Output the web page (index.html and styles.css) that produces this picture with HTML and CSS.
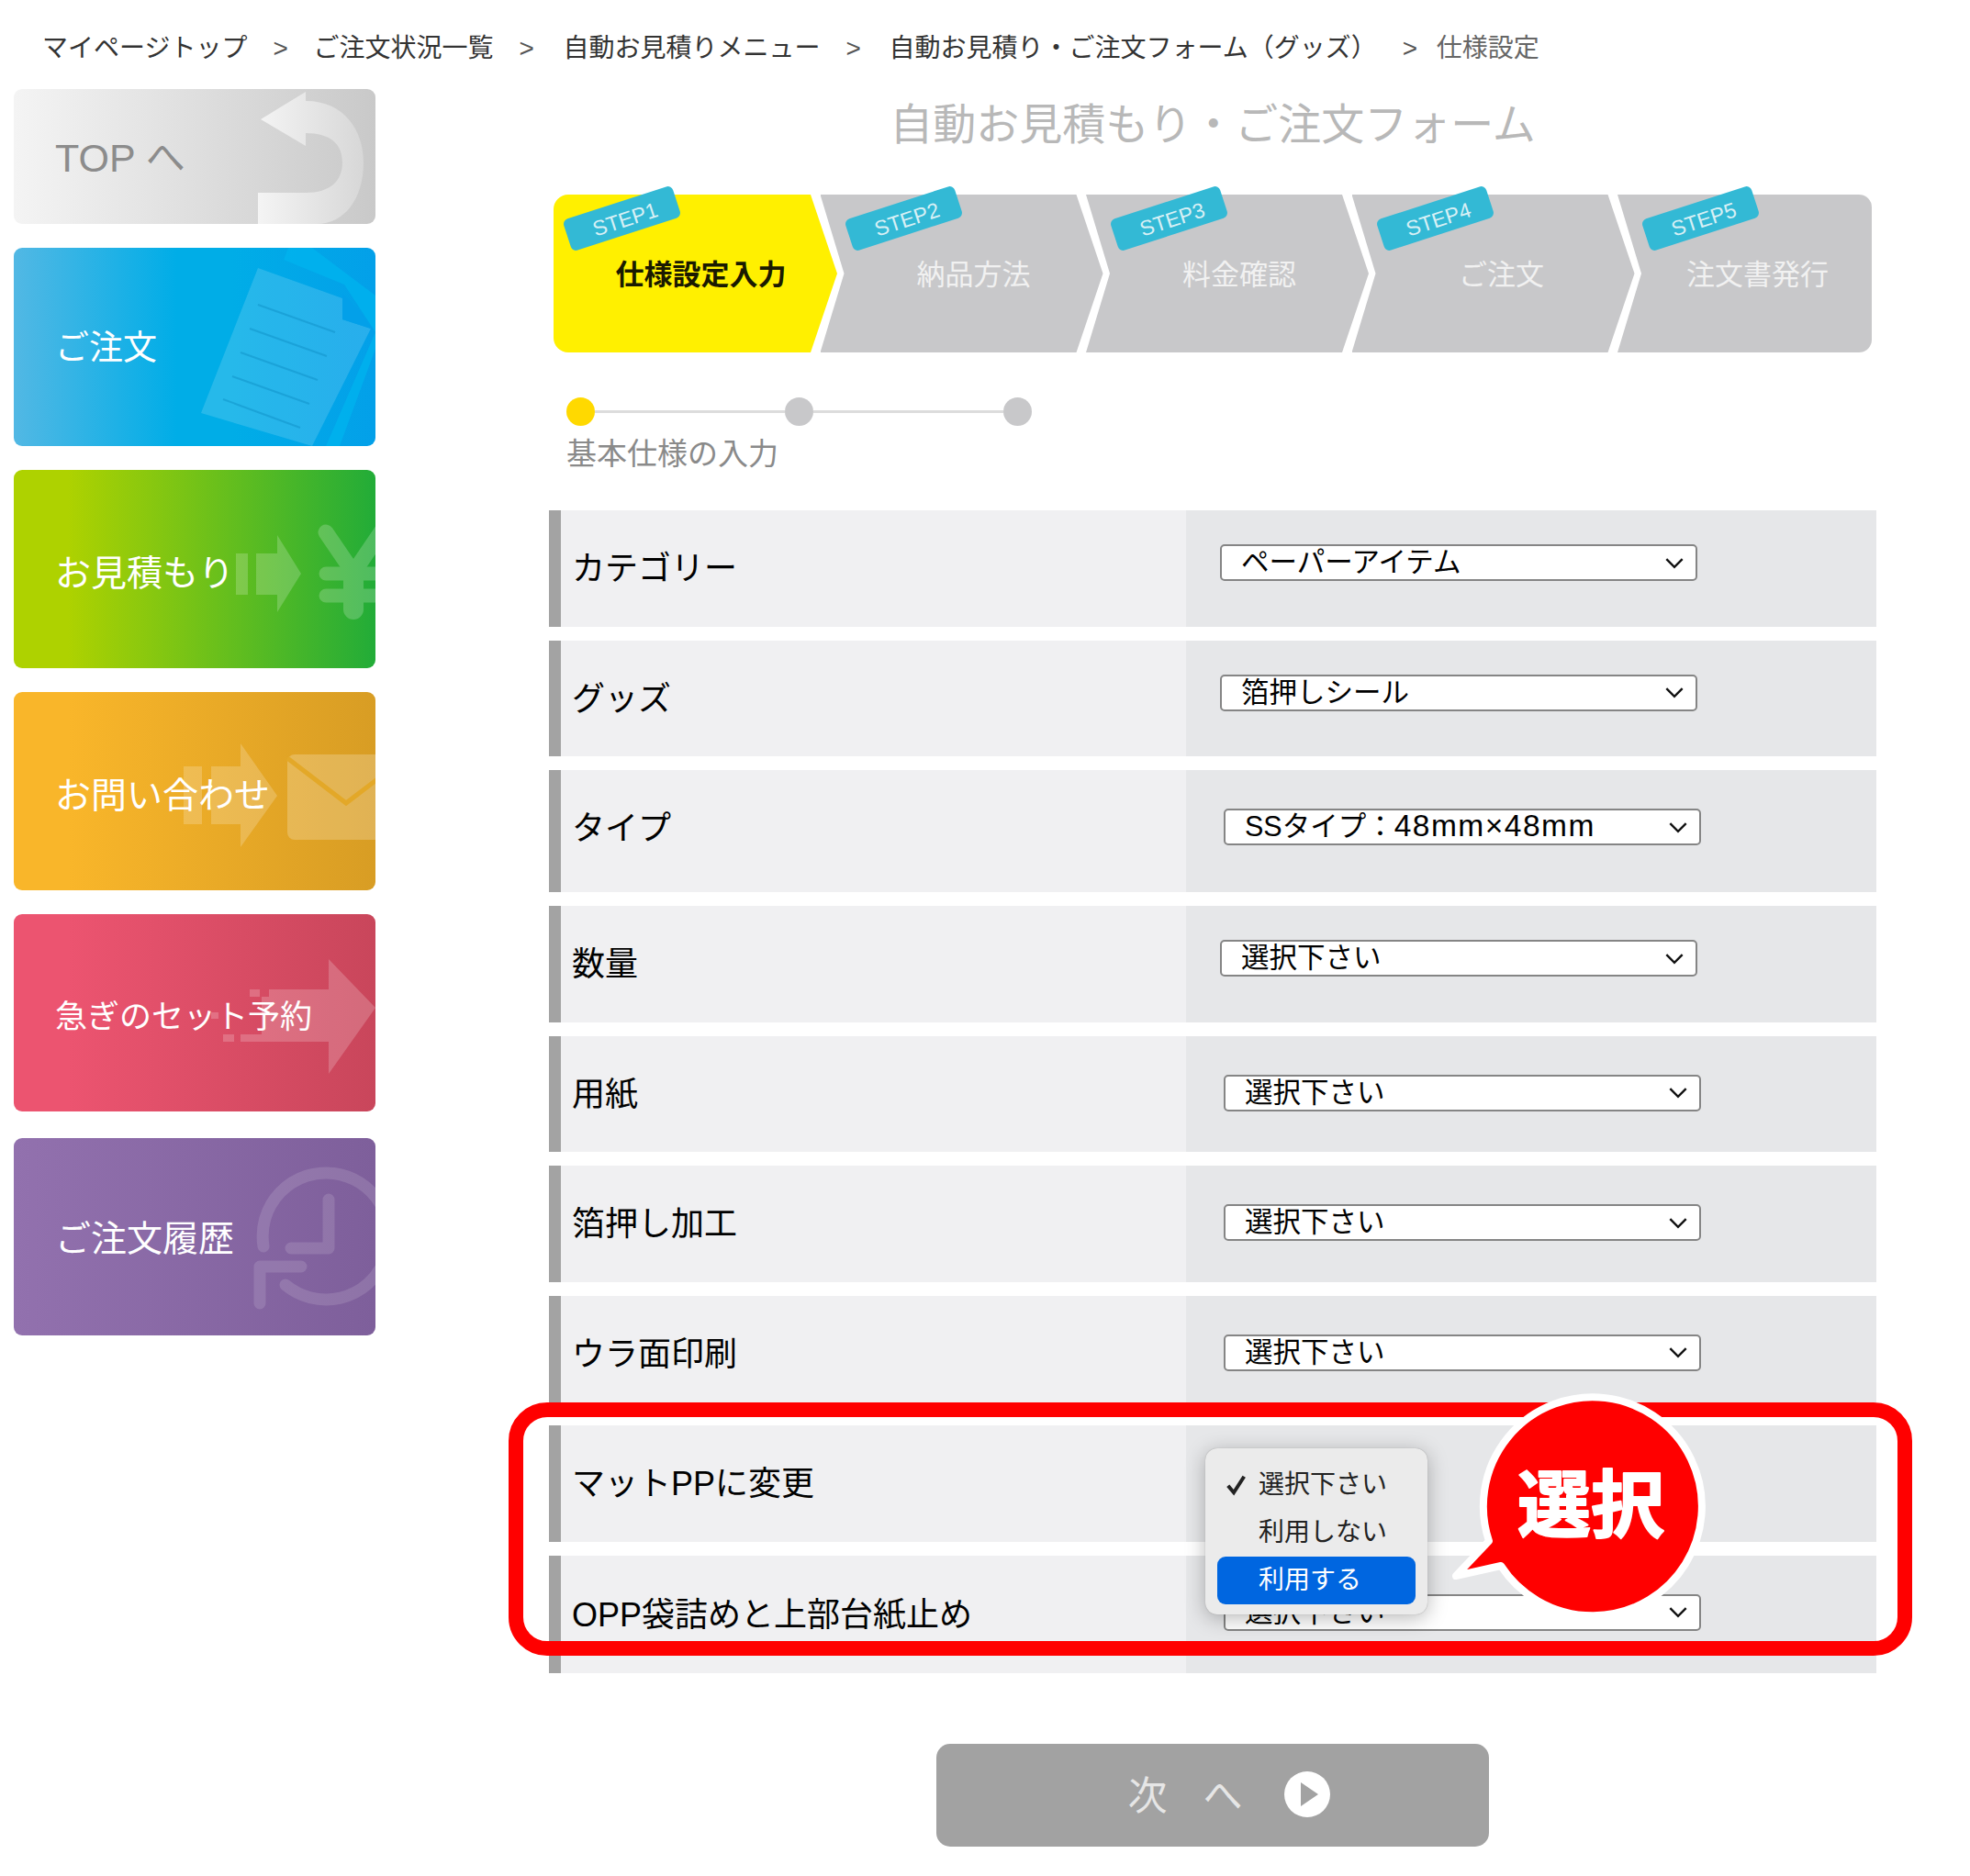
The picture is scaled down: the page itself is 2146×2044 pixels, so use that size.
FILE: index.html
```html
<!DOCTYPE html>
<html lang="ja">
<head>
<meta charset="utf-8">
<title>仕様設定</title>
<link rel="stylesheet" href="styles.css">
</head>
<body>
<nav class="crumbs">
  <a>マイページトップ</a><span class="sep">&gt;</span>
  <a>ご注文状況一覧</a><span class="sep sep--b">&gt;</span>
  <a>自動お見積りメニュー</a><span class="sep sep--c">&gt;</span>
  <a>自動お見積り・ご注文フォーム（グッズ）</a><span class="sep sep--d">&gt;</span>
  <span class="current">仕様設定</span>
</nav>
<div class="layout">
  <aside class="side">
    <a class="card card--top"><span>TOP へ</span>
      <svg class="deco" viewBox="0 0 394 147"><defs><linearGradient id="g1" gradientUnits="userSpaceOnUse" x1="266" y1="0" x2="385" y2="0"><stop offset="0" stop-color="#f4f4f4"/><stop offset="1" stop-color="#d6d6d6"/></linearGradient></defs><path fill="url(#g1)" d="M269 33 318 3V13C360 13 381 45 381 80 381 120 360 147 330 147H266V113H318C345 113 358 100 358 80 358 60 345 48 318 48V62Z"/></svg>
    </a>
    <a class="card card--order"><span>ご注文</span>
      <svg class="deco" viewBox="0 0 394 216"><path fill="#00b3ee" opacity=".8" d="M299 0 294 13 360 40 394 92 340 216H355L394 110V52L325 0Z"/><path fill="#fff" opacity=".15" d="M266 22 358 55V78L389 88 325 216 204 180Z"/><path fill="#03a0e9" d="M358 50 376 68 389 88 358 78Z"/><g stroke="#0a86bd" stroke-opacity=".4" stroke-width="2"><path d="M266 62 350 92M257 88 341 118M247 114 331 144M238 140 322 170M228 165 312 196"/></g></svg>
    </a>
    <a class="card card--quote"><span>お見積もり</span>
      <svg class="deco" viewBox="0 0 394 216"><path fill="#fff" opacity=".2" d="M242 91H255V136H242ZM264 91H287V71L313 113 287 155V136H264Z"/><g opacity=".2" fill="none" stroke="#fff" stroke-linecap="round" stroke-linejoin="round"><path stroke-width="17" d="M340 68 370 112 404 62"/><path stroke-width="22" d="M370 112V152"/><path stroke-width="15" d="M340 113H404M340 137H404"/></g></svg>
    </a>
    <a class="card card--contact"><span>お問い合わせ</span>
      <svg class="deco" viewBox="0 0 394 216"><path fill="#fff" opacity=".2" d="M185 81H205V144H185ZM215 81H247V56L287 113 247 169V144H215Z"/><rect x="298" y="68" width="120" height="93" rx="8" fill="#fff" opacity=".22"/><path fill="none" stroke="#e3a828" stroke-width="5" d="M298 72 362 121 400 92"/></svg>
    </a>
    <a class="card card--rush"><span>急ぎのセット予約</span>
      <svg class="deco" viewBox="0 0 394 215"><path fill="#fff" opacity=".2" d="M278 82H343V49L394 102 343 174V139H247V131H270V90H278ZM257 82H268V90H257ZM228 131H240V139H228ZM215 107H223V114H215Z"/></svg>
    </a>
    <a class="card card--history"><span>ご注文履歴</span>
      <svg class="deco" viewBox="0 0 394 215"><g fill="none" stroke="#fff" stroke-opacity=".13" stroke-width="13" stroke-linecap="round" stroke-linejoin="round"><path d="M272 118A69 69 0 1 1 296 160"/><path d="M343 67V120H302"/><path d="M313 140H268V180"/></g></svg>
    </a>
  </aside>
  <main class="main">
    <h1 class="title">自動お見積もり・ご注文フォーム</h1>
    <ol class="steps">
      <li class="step step--first"><b class="badge">STEP1</b><span>仕様設定入力</span></li>
      <li class="step"><b class="badge">STEP2</b><span>納品方法</span></li>
      <li class="step"><b class="badge">STEP3</b><span>料金確認</span></li>
      <li class="step step--short"><b class="badge">STEP4</b><span>ご注文</span></li>
      <li class="step step--last"><b class="badge">STEP5</b><span>注文書発行</span></li>
    </ol>
    <div class="sub">
      <i class="dot dot--on"></i><i class="line"></i><i class="dot"></i><i class="line"></i><i class="dot"></i>
    </div>
    <p class="sub-label">基本仕様の入力</p>
    <div class="form">
      <div class="row"><div class="name">カテゴリー</div><div class="val val--a"><div class="sel">ペーパーアイテム<svg viewBox="0 0 20 12"><path d="M2 2 10 10 18 2"/></svg></div></div></div>
      <div class="row"><div class="name">グッズ</div><div class="val val--a"><div class="sel">箔押しシール<svg viewBox="0 0 20 12"><path d="M2 2 10 10 18 2"/></svg></div></div></div>
      <div class="row row--tall"><div class="name">タイプ</div><div class="val val--b"><div class="sel"><span>SSタイプ：<span class="sel-num">48mm×48mm</span></span><svg viewBox="0 0 20 12"><path d="M2 2 10 10 18 2"/></svg></div></div></div>
      <div class="row"><div class="name">数量</div><div class="val val--a"><div class="sel">選択下さい<svg viewBox="0 0 20 12"><path d="M2 2 10 10 18 2"/></svg></div></div></div>
      <div class="row"><div class="name">用紙</div><div class="val val--b"><div class="sel">選択下さい<svg viewBox="0 0 20 12"><path d="M2 2 10 10 18 2"/></svg></div></div></div>
      <div class="row"><div class="name">箔押し加工</div><div class="val val--b"><div class="sel">選択下さい<svg viewBox="0 0 20 12"><path d="M2 2 10 10 18 2"/></svg></div></div></div>
      <div class="row"><div class="name">ウラ面印刷</div><div class="val val--b"><div class="sel">選択下さい<svg viewBox="0 0 20 12"><path d="M2 2 10 10 18 2"/></svg></div></div></div>
      <div class="row"><div class="name">マットPPに変更</div><div class="val val--b val--open">
        <div class="sel sel--short"></div>
        <ul class="menu">
          <li class="opt"><svg viewBox="0 0 20 20"><path d="M3 11 8 17 17 3"/></svg>選択下さい</li>
          <li class="opt">利用しない</li>
          <li class="opt opt--hot">利用する</li>
        </ul>
      </div></div>
      <div class="row row--last"><div class="name name--low">OPP袋詰めと上部台紙止め</div><div class="val val--b"><div class="sel">選択下さい<svg viewBox="0 0 20 12"><path d="M2 2 10 10 18 2"/></svg></div></div></div>
      <div class="frame"></div>
      <svg class="bubble" viewBox="0 0 290 260">
        <path class="bubble-shape" d="M16 196 52 158A119 119 0 1 1 65 185Z"/>
        <text class="bubble-text" x="163" y="147" text-anchor="middle">選択</text>
      </svg>
    </div>
    <a class="next"><span class="next-text">次へ</span>
      <svg viewBox="0 0 50 50"><circle cx="25" cy="25" r="25" fill="#fff"/><path d="M18 12 37 25 18 38Z" fill="#a2a2a2"/></svg>
    </a>
  </main>
</div>
</body>
</html>
```

FILE: styles.css
```css
* { box-sizing: border-box; }
html, body { margin: 0; padding: 0; }
body {
  width: 2146px;
  height: 2044px;
  overflow: hidden;
  background: #fff;
  color: #000;
  font-family: "Liberation Sans", "Noto Sans CJK JP", sans-serif;
}

.crumbs {
  display: flex;
  align-items: center;
  height: 40px;
  margin-top: 33px;
  padding-left: 46px;
  font-size: 28px;
  line-height: 40px;
  color: #333;
  white-space: nowrap;
}
.sep { width: 72px; padding-left: 28px; color: #555; }
.sep--b { width: 76px; }
.sep--c { width: 75px; }
.sep--d { width: 65px; }
.current { color: #666; }

.layout { display: flex; margin-top: 24px; }

.side {
  display: flex;
  flex-direction: column;
  gap: 26px;
  width: 409px;
  padding-left: 15px;
  flex: none;
}
.card {
  position: relative;
  display: flex;
  align-items: center;
  width: 394px;
  height: 216px;
  padding: 0 0 3px 45px;
  border-radius: 9px;
  overflow: hidden;
  color: #fff;
  font-size: 37px;
  white-space: nowrap;
}
.card span { position: relative; z-index: 1; }
.deco { position: absolute; left: 0; top: 0; width: 100%; height: 100%; }
.card--top { height: 147px; padding-bottom: 6px; font-size: 43px; color: #8c8c8c; background: linear-gradient(90deg, #f4f4f4, #c9c9c9); }
.card--order { padding-bottom: 5px; background: linear-gradient(90deg, #52b8e4, #00ade7 45%, #00ade7 60%, #03a0e9); }
.card--quote { padding: 2px 0 0 45px; font-size: 39px; background: linear-gradient(90deg, #aed200 15%, #22ac38); }
.card--contact { padding: 2px 0 0 45px; font-size: 39px; background: linear-gradient(90deg, #f9b62a 15%, #d89d24); }
.card--rush { height: 215px; padding: 2px 0 0 45px; font-size: 35px; background: linear-gradient(90deg, #ec5470 15%, #c9465b); }
.card--history { height: 215px; margin-top: 3px; padding-bottom: 4px; font-size: 39px; background: linear-gradient(90deg, #9271ae, #7e5f9b); }

.main { width: 1446px; margin-left: 189px; flex: none; }
.title {
  margin: 0;
  height: 74px;
  font-size: 47px;
  font-weight: 400;
  line-height: 77px;
  text-align: center;
  color: #b8b8b8;
}

.steps {
  display: flex;
  height: 172px;
  margin: 41px 0 0 5px;
  padding: 0;
  list-style: none;
}
.step {
  position: relative;
  display: flex;
  align-items: center;
  justify-content: center;
  width: 308px;
  margin-left: -18.5px;
  padding: 0 0 3px 26px;
  font-size: 31px;
  color: #f1f1f1;
  flex: none;
}
.step::before {
  content: "";
  position: absolute;
  inset: 0;
  background: #c8c8ca;
  clip-path: polygon(0 0, calc(100% - 29px) 0, 100% 50%, calc(100% - 29px) 100%, 0 100%, 26px 50%);
}
.step span { position: relative; }
.step--first { width: 309px; margin-left: 0; padding-left: 12px; font-weight: 700; color: #1a1a00; }
.step--first::before {
  background: #fff000;
  border-radius: 16px 0 0 16px;
  clip-path: polygon(0 0, calc(100% - 29px) 0, 100% 50%, calc(100% - 29px) 100%, 0 100%);
}
.step--short { padding-left: 18px; }
.step--last { width: 277px; padding-left: 28px; }
.step--last::before {
  border-radius: 0 14px 14px 0;
  clip-path: polygon(0 0, 100% 0, 100% 100%, 0 100%, 26px 50%);
}
.badge {
  position: absolute;
  left: 28px;
  top: 8px;
  z-index: 1;
  width: 125px;
  height: 36px;
  padding: 4px 0 0 6px;
  border-radius: 6px;
  background: #33b9d5;
  color: #d8f0f5;
  font-size: 23px;
  font-weight: 400;
  line-height: 32px;
  text-align: center;
  transform: rotate(-18deg);
}
.step--first .badge { left: 12px; }

.sub { display: flex; align-items: center; height: 31px; margin: 49px 0 0 19px; }
.dot { width: 31px; height: 31px; border-radius: 50%; background: #c8c8ca; flex: none; }
.dot--on { background: #ffd900; }
.line { width: 207px; height: 3px; background: #dcdcdc; flex: none; }
.sub-label {
  margin: 11px 0 0 19px;
  font-size: 33px;
  line-height: 40px;
  color: #8a8a8a;
}

.form {
  position: relative;
  display: flex;
  flex-direction: column;
  gap: 15px;
  margin-top: 41px;
}
.row { display: flex; height: 126.5px; flex: none; }
.row--tall { height: 133px; }
.row--last { height: 128px; }
.name {
  width: 694px;
  padding: 40px 0 0 12px;
  border-left: 13px solid #a3a3a3;
  background: #f0f0f2;
  font-size: 36px;
  line-height: 48px;
  white-space: nowrap;
  flex: none;
}
.name--low { padding-top: 41px; }
.val { position: relative; flex: 1; background: #e6e7e9; }
.val--a { padding: 37px 0 0 37px; }
.val--b { padding: 42px 0 0 41px; }
.val--open { padding-top: 44px; }
.sel {
  display: flex;
  align-items: center;
  justify-content: space-between;
  width: 520px;
  height: 40px;
  padding: 0 12px 2px 21px;
  border: 2px solid #858585;
  border-radius: 5px;
  background: #fff;
  font-size: 30.5px;
  line-height: 36px;
  white-space: nowrap;
}
.sel svg { width: 22px; height: 13px; fill: none; stroke: #111; stroke-width: 2.2; margin-top: 2px; }
.sel--short { width: 222px; }
.sel-num { font-size: 33.5px; letter-spacing: 1.5px; }

.menu {
  position: absolute;
  left: 21px;
  top: 25px;
  z-index: 2;
  width: 242px;
  height: 181px;
  margin: 0;
  padding: 14px 13px 11px;
  list-style: none;
  border-radius: 13px;
  background: #ebebeb;
  box-shadow: 0 0 1px #8c8c8c, 0 4px 22px rgba(0, 0, 0, .28);
}
.opt {
  position: relative;
  height: 52px;
  padding-left: 45px;
  border-radius: 9px;
  font-size: 28px;
  line-height: 51px;
  color: #222;
  white-space: nowrap;
}
.opt svg {
  position: absolute;
  left: 8px;
  top: 13px;
  width: 25px;
  height: 25px;
  fill: none;
  stroke: #222;
  stroke-width: 3.2;
}
.opt--hot { background: #0066e0; color: #fff; }

.frame {
  position: absolute;
  left: -44px;
  top: 972px;
  z-index: 3;
  width: 1529px;
  height: 276px;
  border: 16px solid #f00;
  border-radius: 42px;
}
.bubble {
  position: absolute;
  left: 972px;
  top: 965px;
  z-index: 4;
  width: 290px;
  height: 260px;
  overflow: visible;
}
.bubble-shape { fill: #f00; stroke: #fff; stroke-width: 8; stroke-linejoin: round; }
.bubble-text {
  fill: #fff;
  stroke: #fff;
  stroke-width: 2;
  stroke-linejoin: round;
  font-size: 80px;
  font-weight: 700;
}

.next {
  display: flex;
  align-items: center;
  justify-content: center;
  gap: 6px;
  width: 602px;
  height: 112px;
  margin: 77px 0 0 422px;
  padding-left: 35px;
  border-radius: 15px;
  background: #a2a2a2;
  color: #e6e6e6;
  font-size: 43px;
}
.next-text { letter-spacing: 39px; padding-bottom: 6px; }
.next svg { width: 50px; height: 50px; flex: none; margin-bottom: 2px; }
```
